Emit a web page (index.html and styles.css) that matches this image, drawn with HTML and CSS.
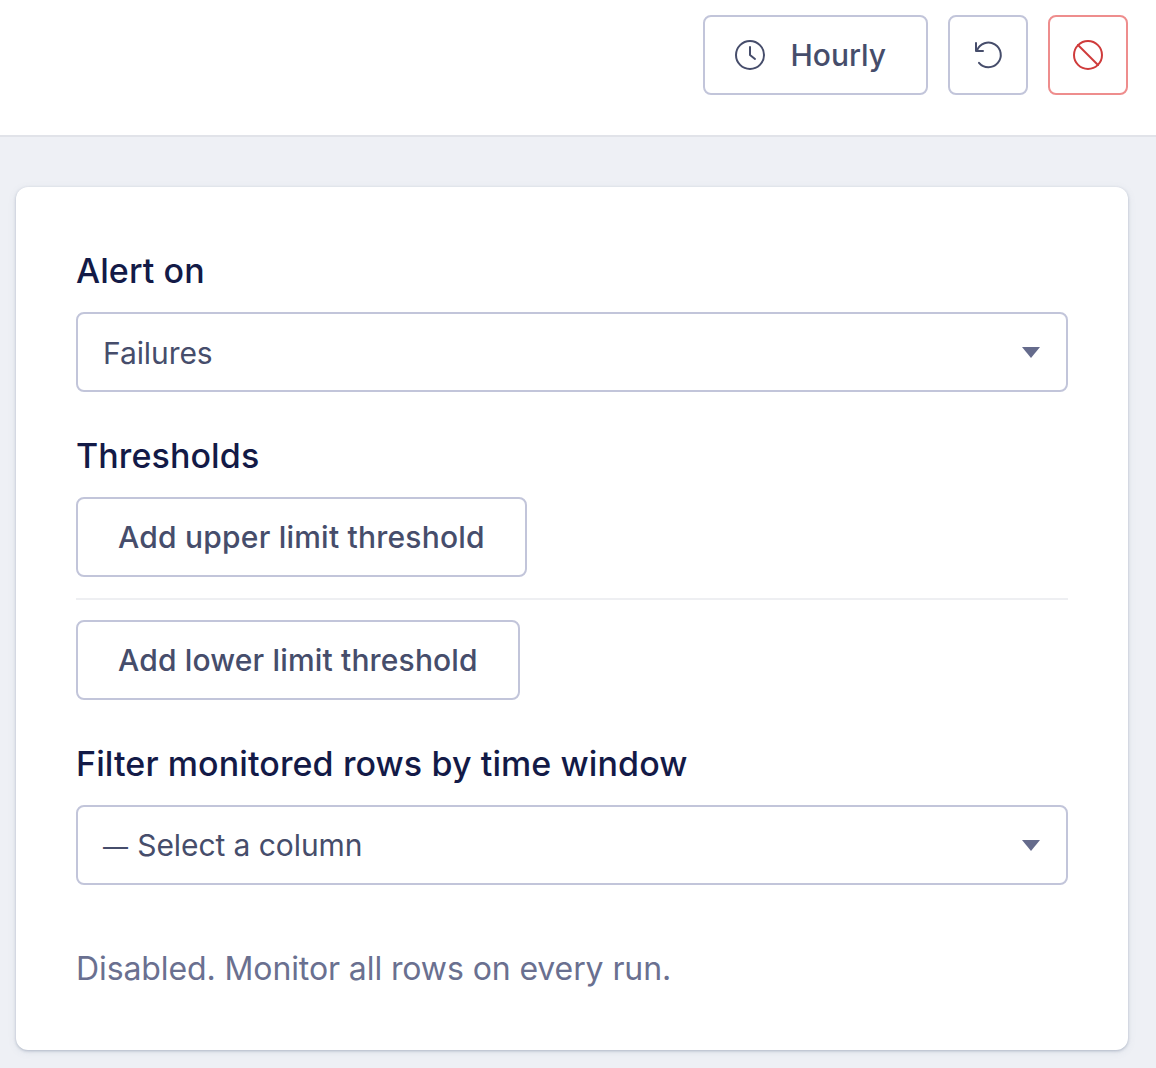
FILE: index.html
```html
<!DOCTYPE html>
<html lang="en">
<head>
<meta charset="utf-8">
<title>Monitor settings</title>
<link rel="stylesheet" href="styles.css">
</head>
<body>
<header class="topbar">
  <button class="btn btn-schedule" type="button">
    <svg class="icon" viewBox="0 0 30 30" fill="none" stroke="currentColor" stroke-width="2" stroke-linecap="round" stroke-linejoin="round"><circle cx="15" cy="15" r="14"/><path d="M15 7v8l5 4"/></svg>
    <span>Hourly</span>
  </button>
  <button class="btn btn-square" type="button" aria-label="Reset">
    <svg class="icon" viewBox="0 0 30 30" fill="none" stroke="currentColor" stroke-width="2" stroke-linecap="round" stroke-linejoin="round"><path d="M4 10.5A12.3 12.3 0 1 1 6 22.8"/><path d="M3 3v8h7"/></svg>
  </button>
  <button class="btn btn-square btn-danger" type="button" aria-label="Disable">
    <svg class="icon" viewBox="0 0 30 30" fill="none" stroke="currentColor" stroke-width="2" stroke-linecap="round"><circle cx="15" cy="15" r="14"/><path d="M5 5l20 20"/></svg>
  </button>
</header>
<main class="content">
  <section class="card">
    <div class="field field-first">
      <h2 class="label">Alert on</h2>
      <div class="select"><span>Failures</span><i class="caret"></i></div>
    </div>
    <div class="field">
      <h2 class="label">Thresholds</h2>
      <button class="btn btn-upper" type="button">Add upper limit threshold</button>
      <hr class="divider">
      <button class="btn btn-lower" type="button">Add lower limit threshold</button>
    </div>
    <div class="field">
      <h2 class="label">Filter monitored rows by time window</h2>
      <div class="select"><span><span class="dash">—</span> Select a column</span><i class="caret"></i></div>
    </div>
    <p class="hint">Disabled. Monitor all rows on every run.</p>
  </section>
</main>
</body>
</html>
```
FILE: styles.css
```css
* { box-sizing: border-box; }
html, body { margin: 0; padding: 0; }
body {
  height: 1068px;
  overflow: hidden;
  background: #eef0f5;
  font-family: Inter, "Liberation Sans", sans-serif;
  color: #434a67;
}
.topbar {
  height: 137px;
  padding: 15px 28px 0 0;
  display: flex;
  justify-content: flex-end;
  align-items: flex-start;
  gap: 20px;
  background: #fff;
  border-bottom: 2px solid #e1e3e9;
}
.btn {
  display: inline-flex;
  align-items: center;
  height: 80px;
  padding: 0 40px;
  background: #fff;
  border: 2px solid #c2c5da;
  border-radius: 8px;
  font: 500 30px/36px Inter, "Liberation Sans", sans-serif;
  color: #464d6b;
}
.btn-upper { letter-spacing: .22px; }
.btn-lower { letter-spacing: .16px; }
.btn-schedule { width: 225px; padding: 0 0 0 30px; gap: 25.5px; }
.btn-square { width: 80px; padding: 0; justify-content: center; }
.btn-danger { border-color: #ee8d8d; color: #cf3b3b; }
.icon { width: 30px; height: 30px; flex: none; }
.content { padding: 50px 28px 0 16px; }
.card {
  height: 863px;
  padding: 64px 60px 0;
  background: #fff;
  border-radius: 12px;
  box-shadow: 0 1px 3px rgba(90, 105, 135, .38), 0 2px 8px rgba(90, 105, 135, .1);
}
.field { margin-top: 44px; }
.field-first { margin-top: 0; }
.label {
  margin: 0 0 21px;
  font: 500 34px/40px Inter, "Liberation Sans", sans-serif;
  letter-spacing: .1px;
  color: #131a47;
}
.select {
  display: flex;
  align-items: center;
  justify-content: space-between;
  height: 80px;
  padding: 1px 26px 0 25px;
  border: 2px solid #c2c5da;
  border-radius: 8px;
  font: 400 30px/36px Inter, "Liberation Sans", sans-serif;
  letter-spacing: -.08px;
  color: #464d6b;
}
.dash { margin-right: 1px; font-size: 25px; }
.caret {
  width: 0;
  height: 0;
  border-style: solid;
  border-width: 11px 9px 0;
  border-color: #656b8c transparent transparent;
}
.divider {
  height: 2px;
  margin: 21px 0 20px;
  border: 0;
  background: #eeeff2;
}
.hint {
  margin: 65px 0 0;
  font: 400 32px/38px Inter, "Liberation Sans", sans-serif;
  letter-spacing: -.1px;
  color: #6a7090;
}
```
